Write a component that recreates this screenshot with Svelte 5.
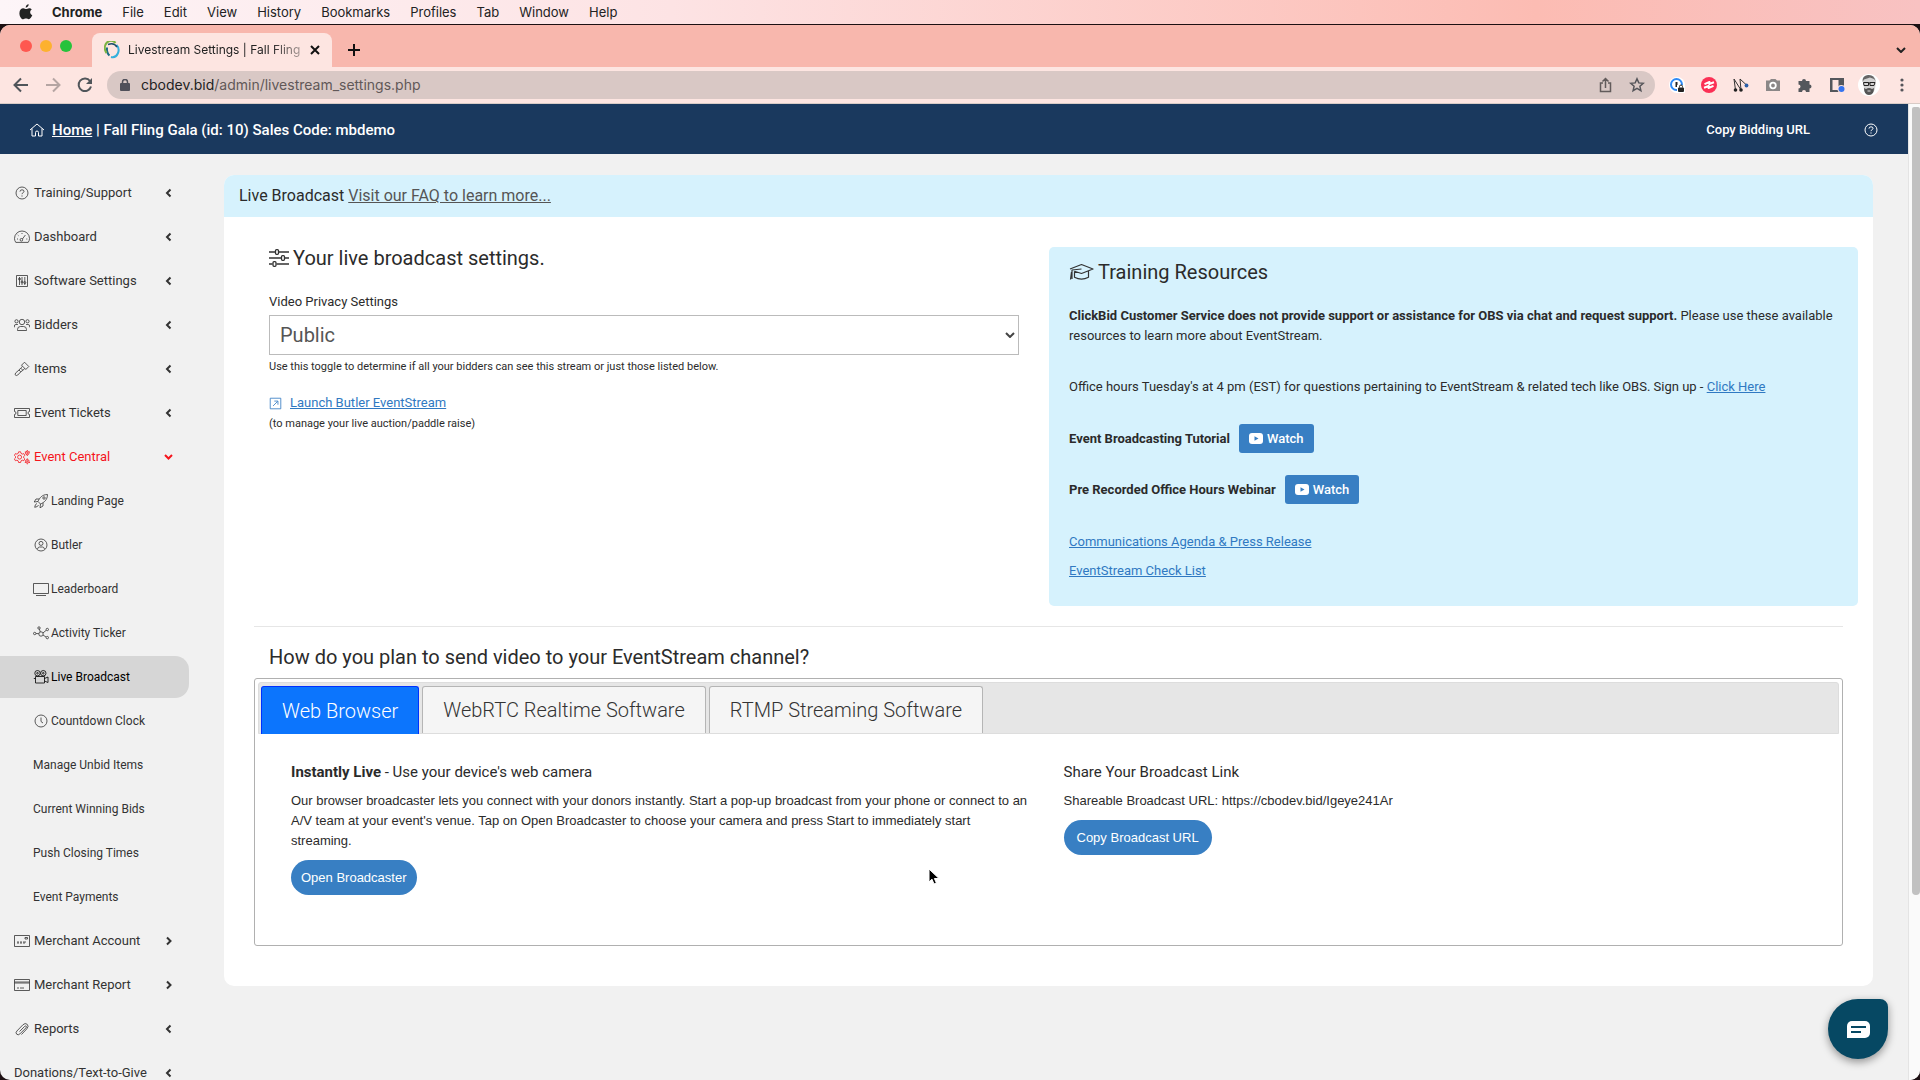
<script>
	const circle = (x, y, r) => `M${x - r} ${y}a${r} ${r} 0 1 0 ${r * 2} 0a${r} ${r} 0 1 0 ${-r * 2} 0z`;

	// line icons on a 16x16 grid
	const icons = {
		question: circle(8, 8, 6) + 'M6 6.600q0-1.800 2-1.800t2 1.600c0 1.400-2 1.200-2 2.800M8 10.400v1.200',
		gauge: 'M1.800 13.400Q.5 11.500.5 9.500a7.500 7.500 0 0 1 15 0q0 2-1.300 3.900z' + circle(7.4, 10.8, 1.3) + 'M8.400 10l3-4M8 4v1M3.800 6l.7.7M3 10h1M12.300 10h1',
		sliders: 'M2.500 2.500h11v11h-11zM5.500 4v8M8 4v8M10.800 4v8' + circle(5.5, 6, 1) + circle(8, 9, 1) + circle(10.8, 9.6, 1),
		users: circle(8, 5, 2.7) + circle(2.5, 4.3, 1.6) + circle(13.5, 4.3, 1.6) + 'M3.500 13.500v-1q0-3 3-3h3q3 0 3 3v1zM.4 10.300V9q0-1.500 1.500-1.500h2M15.600 10.300V9q0-1.500-1.500-1.500h-2',
		gavel: 'M7.500 4.200l3-3 4.300 4.300-3 3zM8.500 5.300L6.700 7.100l2.200 2.200 1.900-1.900M6.700 7.100L5 9M8.900 9.300L6.500 11M5 9l1.800 1.800-3 3.200q-1.500 1-2.300.2t.2-2.300z',
		ticket: 'M.5 3.500h15v3q-1.500 0-1.500 1.500t1.500 1.500v3H.5v-3q1.500 0 1.500-1.500T.5 6.500zM3.800 5.500h8.400v5H3.800z',
		cogs: 'M4.600 2.800h2l.4 1.600 1.300.7 1.500-.5 1 1.800-1.100 1v1.500l1.100 1-1 1.800-1.500-.5-1.300.7-.4 1.600h-2l-.4-1.600-1.300-.7-1.500.5-1-1.800 1.100-1V7.400l-1.100-1 1-1.800 1.500.5 1.300-.7z' + circle(5.600, 8.1, 2) + circle(13.3, 4, 1.8) + circle(13.3, 12.3, 1.8) + circle(13.3, 4, .6) + circle(13.3, 12.3, .6) + 'M13.300 1v1M13.300 6v1M10.800 3h1M15 3h1M13.300 9.300v1M13.300 14.300v1M10.800 13.500h1M15 13.500h1',
		rocket: 'M5 8.500C6.500 5 9 1.500 14.500 1.500 14.500 7 11 9.500 7.500 11zM6 6H3L1.200 9l3.800-.5M10 10v3l-3 1.800.5-3.800' + circle(11, 5, 1.2) + 'M4 10.500q-2 .5-2.300 3.800Q5 14 5.500 12',
		user: circle(8, 8, 6) + circle(8, 6.400, 2) + 'M4.500 12q.5-2 2-2h3q1.500 0 2 2',
		monitor: 'M.5 2.500h15v10H.5zM3 14.500h10',
		network: circle(8, 9, 2.2) + circle(1.700, 8.5, 1.2) + circle(6, 3, 1.2) + circle(14.3, 4.5, 1.2) + circle(14.3, 12.6, 1.2) + 'M3 8.600h2.800M6.400 4.100L7.300 7M9.900 8l3.200-2.600M10 10l3 2',
		camera: circle(4.5, 4.2, 2.700) + circle(10.3, 4.2, 2.700) + 'M2.500 7.500h9v6.500h-9zM11.500 9.500l3.500-1.500v5.500L11.500 12M.8 9.500h1.700' + circle(4.5, 4.2, .8) + circle(10.3, 4.2, .8),
		clock: circle(8, 8, 6) + 'M8 4.500v4l2 1.500',
		check: 'M.5 2.500h15v11H.5zM11 4.500h2.500v1.500H11zM3 9h2M6 9h2M9 9h3M3 10h2M6 10h2M9 10h2',
		card: 'M.5 2.500h15v11H.5zM.5 5h15M.5 6h15M3 11h2M6 11h4',
		clip: 'M5.500 10.500l5-5q1-1 1.700-.3t-.3 1.700l-6 6q-1.700 1.700-3.200.3t.2-3.200l6-6.200q2.300-2.300 4.300-.5t-.3 4.500L7.500 13.500',
		home: 'M1 8l7-6 7 6M3 6.500V14h3.500v-3.500q0-1.500 1.500-1.500t1.500 1.500V14H13V6.500',
		external: 'M1.500 1.500h13v13h-13zM5 11l5.500-5.500M6.500 5H11v4.500'
	};

	const chevrons = {
		left: 'M6.500 1.500L3 5l3.500 3.500',
		right: 'M3 1.500L6.500 5 3 8.500',
		down: 'M1 3l3.500 3.500L8 3'
	};

	const nav = [
		{ label: 'Training/Support', icon: 'question', arrow: 'left' },
		{ label: 'Dashboard', icon: 'gauge', arrow: 'left' },
		{ label: 'Software Settings', icon: 'sliders', arrow: 'left' },
		{ label: 'Bidders', icon: 'users', arrow: 'left' },
		{ label: 'Items', icon: 'gavel', arrow: 'left' },
		{ label: 'Event Tickets', icon: 'ticket', arrow: 'left' },
		{ label: 'Event Central', icon: 'cogs', arrow: 'down', open: true },
		{ label: 'Landing Page', icon: 'rocket', sub: true },
		{ label: 'Butler', icon: 'user', sub: true },
		{ label: 'Leaderboard', icon: 'monitor', sub: true },
		{ label: 'Activity Ticker', icon: 'network', sub: true },
		{ label: 'Live Broadcast', icon: 'camera', sub: true, active: true },
		{ label: 'Countdown Clock', icon: 'clock', sub: true },
		{ label: 'Manage Unbid Items', sub: true },
		{ label: 'Current Winning Bids', sub: true },
		{ label: 'Push Closing Times', sub: true },
		{ label: 'Event Payments', sub: true },
		{ label: 'Merchant Account', icon: 'check', arrow: 'right' },
		{ label: 'Merchant Report', icon: 'card', arrow: 'right' },
		{ label: 'Reports', icon: 'clip', arrow: 'left' },
		{ label: 'Donations/Text-to-Give', arrow: 'left' }
	];

	const menus = ['File', 'Edit', 'View', 'History', 'Bookmarks', 'Profiles', 'Tab', 'Window', 'Help'];
	const tabs = ['Web Browser', 'WebRTC Realtime Software', 'RTMP Streaming Software'];

	let tab = $state(0);
	let privacy = $state('Public');
</script>

{#snippet icon(name)}
	<svg class="icon" viewBox="0 0 16 16" aria-hidden="true"><path d={icons[name]} /></svg>
{/snippet}

{#snippet watch()}
	<button class="watch">
		<svg width="14" height="11" viewBox="0 0 14 11" aria-hidden="true">
			<rect width="14" height="11" rx="3" fill="#fff" />
			<path d="M5.500 3.200v4.600l4-2.300z" fill="#387fc3" />
		</svg>
		Watch
	</button>
{/snippet}

<div class="desktop">
	<div class="menubar">
		<svg class="apple" width="14" height="16" viewBox="0 0 14 16" aria-hidden="true">
			<path d="M9.700.3c.1 1.700-1.400 3.400-3 3.400C6.500 2 8.100.4 9.700.3zM12.800 5.500c-2.400 1.400-2 4.600.5 5.600-.7 2-2.100 4.200-3.500 4.200-1.100 0-1.500-.7-2.800-.7s-1.700.7-2.800.7C2.200 15.300.4 12 .4 9.200c0-3 1.900-4.900 3.900-4.900 1.200 0 2.100.8 2.900.8.700 0 1.800-.9 3.200-.8.9 0 1.800.4 2.400 1.200z" />
		</svg>
		<b>Chrome</b>
		{#each menus as m}<span>{m}</span>{/each}
	</div>

	<div class="window">
		<div class="tabstrip">
			<div class="lights"><i class="red"></i><i class="yellow"></i><i class="green"></i></div>
			<div class="browser-tab">
				<svg width="16" height="18" viewBox="0 0 16 18" fill="none" stroke-width="2" aria-hidden="true">
					<path d="M7 16a6 7 0 0 0 5.500-12" stroke="#36b0dc" />
					<path d="M3 6.500Q2.500 12 5.500 14.500" stroke="#1c6f86" />
					<path d="M4 3.500Q10 1 13 6" stroke="#1b4d6b" stroke-width="1.500" />
					<path d="M11.500 2A6 7 0 0 0 2.500 12" stroke="#7cb342" />
				</svg>
				<span class="tab-title">Livestream Settings | Fall Fling</span>
				<button class="plain" aria-label="Close tab">
					<svg width="10" height="10" viewBox="0 0 10 10"><path d="M1 1l8 8M9 1L1 9" stroke="#111" stroke-width="2" /></svg>
				</button>
			</div>
			<button class="plain new-tab" aria-label="New tab">
				<svg width="12" height="12" viewBox="0 0 12 12"><path d="M6 0v12M0 6h12" stroke="#111" stroke-width="2" /></svg>
			</button>
			<svg class="tab-search" width="10" height="6" viewBox="0 0 10 6" aria-hidden="true"><path d="M1 1l4 4 4-4" stroke="#222" stroke-width="2" fill="none" /></svg>
		</div>

		<div class="toolbar">
			<div class="history">
				<button class="plain" aria-label="Back">
					<svg width="16" height="16" viewBox="0 0 16 16" fill="none" stroke="#50555a" stroke-width="2"><path d="M15 8H2M8 1.500L1.500 8 8 14.500" /></svg>
				</button>
				<button class="plain" aria-label="Forward">
					<svg width="16" height="16" viewBox="0 0 16 16" fill="none" stroke="#b5a5a3" stroke-width="2"><path d="M1 8h13M8 1.500L14.500 8 8 14.500" /></svg>
				</button>
				<button class="plain" aria-label="Reload">
					<svg width="16" height="16" viewBox="0 0 16 16"><path d="M13 4A6.300 6.300 0 1 0 14 9.500" fill="none" stroke="#50555a" stroke-width="2" /><path d="M15 1v6H9z" fill="#50555a" /></svg>
				</button>
			</div>
			<div class="omnibox">
				<svg width="10" height="13" viewBox="0 0 10 13" aria-hidden="true"><rect y="4" width="10" height="8" rx="1" fill="#50505a" /><path d="M2.500 5V3a2.500 2.500 0 0 1 5 0v2" fill="none" stroke="#50505a" stroke-width="1.500" /></svg>
				<span class="url">cbodev.bid<span>/admin/livestream_settings.php</span></span>
				<svg width="14" height="16" viewBox="0 0 14 16" fill="none" stroke="#625b5b" stroke-width="1.500" aria-hidden="true"><path d="M4 6H1.500v8.500h10V6H9M6.500 11V2M3.500 4.500l3-3 3 3" /></svg>
				<svg width="16" height="16" viewBox="0 0 16 16" fill="none" stroke="#55555a" stroke-width="1.500" aria-hidden="true"><path d="M8 1.800l1.800 4.100 4.500.4-3.400 3 1 4.400L8 11.400l-3.900 2.300 1-4.400-3.400-3 4.500-.4z" /></svg>
			</div>
			<div class="extensions">
				<svg width="16" height="16" viewBox="0 0 16 16"><circle cx="8" cy="8" r="8" fill="#fff" /><circle cx="7.500" cy="7.500" r="5.500" fill="none" stroke="#2f8af5" stroke-width="2" /><path d="M7.500 5v5" stroke="#222" stroke-width="2" /><rect x="8" y="8" width="8" height="8" fill="#fff" /><rect x="9" y="10.500" width="6" height="4.500" rx="1" fill="#222" /><path d="M10.500 10.500v-1a1.500 1.500 0 0 1 3 0v1" fill="none" stroke="#222" /></svg>
				<svg width="16" height="16" viewBox="0 0 16 16"><circle cx="8" cy="8" r="8" fill="#fb3055" /><path d="M3.500 7.200L8.500 5l-.3 2L13 5.200M3 10.800l4.800-1.800-.3 2 5-2.200" fill="none" stroke="#fff" stroke-width="2" stroke-linejoin="round" /></svg>
				<svg width="16" height="16" viewBox="0 0 16 16"><path d="M2.500 13L1 2l7 11-1-11 6.500 6" fill="none" stroke="#333" /><circle cx="2.500" cy="13" r="1.800" fill="#222" /><circle cx="8" cy="13" r="1.800" fill="#222" /><circle cx="13.500" cy="8.500" r="1.900" fill="#2b5fa8" /></svg>
				<svg width="16" height="16" viewBox="0 0 16 16"><path d="M1 3.500h3.500L6 2h4.500L12 3.500h3V14H1z" fill="#8b8787" /><circle cx="8" cy="8.500" r="2.800" fill="none" stroke="#fff" stroke-width="1.800" /></svg>
				<svg width="16" height="16" viewBox="0 0 16 16"><path d="M1.500 4H5a2 2 0 1 1 4 0h3.500v3.500a2 2 0 1 1 0 4V15H9a2 2 0 0 0-4 0H1.500v-3.500a2 2 0 0 0 0-4z" fill="#54575c" /></svg>
				<svg width="16" height="16" viewBox="0 0 16 16"><path d="M1 1h14v14H1zM3.500 3v10h6V3z" fill="#54575c" fill-rule="evenodd" /><circle cx="12.500" cy="12" r="4" fill="#fde5e1" /><circle cx="12.500" cy="12" r="3" fill="#3574f0" /></svg>
				<svg class="avatar" width="22" height="22" viewBox="0 0 22 22"><circle cx="11" cy="11" r="11" fill="#fff" /><path d="M5 7q0-6 6-6t7 6l-1 8q-2 6-6 6t-5-6z" fill="#d2d2d2" /><path d="M4.500 8Q4 1.500 10 1t7.500 6l-1.500-2-4-1.500-6 2z" fill="#666" /><path d="M8 15q3-2 6 0l2-1q0 7-5 7t-5-7z" fill="#555" /><path d="M5.500 8.500h5v3H6zM12 8.500h5l-1 3h-4zM10 9h2" fill="none" stroke="#222" /><path d="M9.500 17h3" stroke="#ddd" /></svg>
				<svg width="4" height="16" viewBox="0 0 4 16" fill="#55555a"><circle cx="2" cy="3" r="1.600" /><circle cx="2" cy="8" r="1.600" /><circle cx="2" cy="13" r="1.600" /></svg>
			</div>
		</div>

		<div class="viewport">
			<div class="page">
				<header>
					<div class="crumb">
						{@render icon('home')}
						<span><a href="#home">Home</a> | Fall Fling Gala (id: 10) Sales Code: mbdemo</span>
					</div>
					<div class="header-actions">
						<button class="plain copy">Copy Bidding URL</button>
						<button class="plain help" aria-label="Help">{@render icon('question')}</button>
					</div>
				</header>

				<div class="body">
					<nav>
						{#each nav as item}
							<a href="#nav" class:sub={item.sub} class:active={item.active} class:open={item.open}>
								{#if item.icon}{@render icon(item.icon)}{/if}
								<span>{item.label}</span>
								{#if item.arrow}
									<svg class="arrow" viewBox="0 0 10 10" aria-hidden="true"><path d={chevrons[item.arrow]} /></svg>
								{/if}
							</a>
						{/each}
					</nav>

					<main>
						<section class="card">
							<div class="card-head">Live Broadcast <a href="#faq">Visit our FAQ to learn more...</a></div>

							<div class="columns">
								<div class="settings">
									<h2>
										<svg width="20" height="18" viewBox="0 0 20 18" fill="none" stroke="#333" stroke-width="1.300" aria-hidden="true">
											<path d="M0 3h6M9.500 3H20M0 9h12M16 9h4M0 15h3.500M7.500 15H20" />
											<rect x="6.500" y=".7" width="3" height="4.600" rx="1" /><rect x="12.500" y="6.700" width="3" height="4.600" rx="1" /><rect x="4" y="12.700" width="3" height="4.600" rx="1" />
										</svg>
										Your live broadcast settings.
									</h2>
									<label for="privacy">Video Privacy Settings</label>
									<div class="select">
										<select id="privacy" bind:value={privacy}>
											<option>Public</option>
											<option>Private</option>
										</select>
										<svg width="10" height="6" viewBox="0 0 10 6" aria-hidden="true"><path d="M1 1l4 4 4-4" stroke="#444" stroke-width="2" fill="none" /></svg>
									</div>
									<small>Use this toggle to determine if all your bidders can see this stream or just those listed below.</small>
									<p class="launch">
										{@render icon('external')}
										<a href="#butler">Launch Butler EventStream</a>
									</p>
									<small>(to manage your live auction/paddle raise)</small>
								</div>

								<aside>
									<h2>
										<svg width="25" height="18" viewBox="0 0 25 18" fill="none" stroke="#333" stroke-width="1.200" stroke-linejoin="round" aria-hidden="true">
											<path d="M1 6l11.500-4.500L24 6l-11.500 4.500L5.500 8.300M12.500 6L3 7v9M1.500 16.500L2.500 9M5.500 8.300v6q7 3.600 14 0V8" />
										</svg>
										Training Resources
									</h2>
									<p><b>ClickBid Customer Service does not provide support or assistance for OBS via chat and request support.</b> Please use these available resources to learn more about EventStream.</p>
									<p class="office">Office hours Tuesday's at 4 pm (EST) for questions pertaining to EventStream &amp; related tech like OBS. Sign up - <a href="#signup">Click Here</a></p>
									<div class="video"><b>Event Broadcasting Tutorial</b>{@render watch()}</div>
									<div class="video"><b>Pre Recorded Office Hours Webinar</b>{@render watch()}</div>
									<div class="docs">
										<a href="#agenda">Communications Agenda &amp; Press Release</a>
										<a href="#checklist">EventStream Check List</a>
									</div>
								</aside>
							</div>

							<div class="channel">
								<h2>How do you plan to send video to your EventStream channel?</h2>
								<div class="tabs">
									<div class="tab-bar" role="tablist">
										{#each tabs as t, i}
											<button role="tab" aria-selected={tab === i} class:selected={tab === i} onclick={() => (tab = i)}>{t}</button>
										{/each}
									</div>
									<div class="panel">
										<div>
											<h3><b>Instantly Live</b> - Use your device's web camera</h3>
											<p>Our browser broadcaster lets you connect with your donors instantly. Start a pop-up broadcast from your phone or connect to an A/V team at your event's venue. Tap on Open Broadcaster to choose your camera and press Start to immediately start streaming.</p>
											<button class="pill">Open Broadcaster</button>
										</div>
										<div>
											<h3>Share Your Broadcast Link</h3>
											<p>Shareable Broadcast URL: https://cbodev.bid/Igeye241Ar</p>
											<button class="pill wide">Copy Broadcast URL</button>
										</div>
									</div>
								</div>
							</div>
						</section>
					</main>
				</div>

				<button class="chat" aria-label="Open chat">
					<svg width="23" height="17" viewBox="0 0 23 17"><path d="M5 0h13a5 5 0 0 1 5 5v7a5 5 0 0 1-5 5H0V5a5 5 0 0 1 5-5z" fill="#fff" /><path d="M4 6h15M4 11h10" stroke="#064863" stroke-width="2" /></svg>
				</button>
			</div>
			<div class="scrollbar"><div class="thumb"></div></div>
		</div>
	</div>

	<svg class="cursor" width="12" height="18" viewBox="0 0 12 18" aria-hidden="true"><path d="M1 1v13l3-2.800 2 4.800 2.400-1L6.400 10.500H11z" fill="#000" stroke="#fff" /></svg>
</div>

<style>
	:global(body) {
		margin: 0;
	}
	.desktop {
		position: relative;
		display: flex;
		flex-direction: column;
		height: 100vh;
		overflow: hidden;
		background: #1d1013;
		color: #2b2b2b;
		font: 13px/20px Roboto, sans-serif;
	}
	.desktop :global(*) {
		box-sizing: border-box;
	}
	button {
		font: inherit;
		cursor: pointer;
	}
	.plain {
		display: flex;
		padding: 0;
		border: 0;
		background: none;
	}
	h2,
	h3,
	p {
		margin: 0;
		font-weight: 400;
	}
	a {
		color: #3079c2;
	}
	.icon {
		flex: none;
		width: 16px;
		height: 16px;
		fill: none;
		stroke: currentColor;
	}

	/* menu bar and browser frame */
	.menubar {
		display: flex;
		flex: none;
		align-items: center;
		gap: 20px;
		height: 24px;
		padding-left: 19px;
		background: linear-gradient(90deg, #fdf5f8, #fde3e4 35%, #fcbcb3 80%, #f8c2c2);
		color: #222;
		font-family: Inter, sans-serif;
	}
	.apple {
		margin-right: -1px;
		fill: #222;
	}
	.window {
		display: flex;
		flex: 1;
		flex-direction: column;
		min-height: 0;
		margin-top: 1px;
		border-radius: 10px;
		overflow: hidden;
		background: #f1f1f1;
	}
	.tabstrip {
		display: flex;
		flex: none;
		align-items: center;
		height: 42px;
		padding-left: 20px;
		background: #f8b7ad;
	}
	.lights {
		display: flex;
		gap: 8px;
		width: 72px;
	}
	.lights i {
		width: 12px;
		height: 12px;
		border-radius: 50%;
	}
	.red {
		background: #fe5850;
	}
	.yellow {
		background: #fdb12f;
	}
	.green {
		background: #27c23c;
	}
	.browser-tab {
		display: flex;
		align-items: center;
		align-self: flex-end;
		width: 240px;
		height: 34px;
		padding: 0 12px;
		border-radius: 8px 8px 0 0;
		background: #fde5e1;
		color: #222;
	}
	.tab-title {
		flex: 1;
		margin: 0 4px 0 8px;
		white-space: nowrap;
		font: 12px/16px Inter, sans-serif;
		mask-image: linear-gradient(90deg, #000 80%, #0004);
	}
	.new-tab {
		margin: 8px 0 0 16px;
	}
	.tab-search {
		margin: 8px 14px 0 auto;
	}
	.toolbar {
		display: flex;
		flex: none;
		align-items: center;
		height: 37px;
		padding: 0 16px 0 13px;
		border-bottom: 1px solid #d8cbc6;
		background: #fde5e1;
	}
	.history {
		display: flex;
		gap: 16px;
		width: 94px;
	}
	.omnibox {
		display: flex;
		flex: 1;
		align-items: center;
		gap: 16px;
		height: 28px;
		padding: 0 10px 0 13px;
		border-radius: 14px;
		background: #d9c8c5;
	}
	.url {
		flex: 1;
		margin-left: -5px;
		color: #222;
		font: 14px/20px Inter, sans-serif;
	}
	.url span {
		color: #615858;
	}
	.extensions {
		display: flex;
		align-items: center;
		gap: 16px;
		margin-left: 14px;
	}
	.avatar {
		margin: 0 4px 0 -3px;
	}

	/* page */
	.viewport {
		display: flex;
		flex: 1;
		min-height: 0;
	}
	.page {
		position: relative;
		flex: 1;
		min-width: 0;
		overflow: hidden;
	}
	.scrollbar {
		width: 12px;
		padding: 3px 0 0 3px;
		border-left: 1px solid #e4e4e4;
		background: #fafafa;
	}
	.thumb {
		height: 81%;
		border-radius: 4px 4px 8px 8px;
		background: #c1c1c1;
	}
	header {
		display: flex;
		align-items: center;
		justify-content: space-between;
		height: 50px;
		padding: 2px 29px 0;
		background: #1a395e;
		color: #fff;
	}
	.crumb {
		display: flex;
		align-items: center;
		gap: 7px;
		font-size: 15px;
		font-weight: 500;
	}
	.crumb a {
		color: inherit;
	}
	.header-actions {
		display: flex;
		align-items: center;
		gap: 53px;
	}
	.copy {
		color: #fff;
		font-weight: 500;
	}
	.help {
		color: #fff;
	}
	.body {
		display: flex;
	}
	nav {
		display: flex;
		flex: none;
		flex-direction: column;
		gap: 2px;
		width: 224px;
		padding-top: 18px;
	}
	nav a {
		display: flex;
		align-items: center;
		gap: 4px;
		width: 189px;
		height: 42px;
		padding: 0 15px 0 14px;
		border-radius: 0 14px 14px 0;
		color: #333;
		text-decoration: none;
	}
	nav span {
		flex: 1;
		white-space: nowrap;
	}
	nav .icon {
		stroke-width: 0.8;
	}
	nav .sub {
		padding-left: 33px;
		gap: 2px;
		font-size: 12px;
	}
	nav .active {
		background: #d6d6d6;
		color: #000;
	}
	nav .open {
		color: #f5141c;
	}
	.arrow {
		width: 10px;
		height: 10px;
		fill: none;
		stroke: currentColor;
		stroke-width: 2;
	}
	main {
		flex: 1;
		min-width: 0;
		padding: 21px 35px 0 0;
	}
	.card {
		padding-bottom: 40px;
		border-radius: 10px;
		background: #fff;
		overflow: hidden;
	}
	.card-head {
		height: 42px;
		padding: 11px 15px;
		background: #d6f2fd;
		font-size: 16px;
	}
	.card-head a {
		color: #555;
	}
	.columns {
		display: grid;
		grid-template-columns: minmax(0, 750fr) minmax(0, 809fr);
		gap: 30px;
		padding: 30px 15px 20px 45px;
	}
	h2 {
		display: flex;
		align-items: center;
		gap: 4px;
		font-size: 20px;
		line-height: 22px;
	}
	.settings {
		display: flex;
		flex-direction: column;
	}
	.settings h2 {
		margin-bottom: 23px;
	}
	.select {
		position: relative;
		margin: 3px 0 4px;
	}
	.select svg {
		position: absolute;
		right: 4px;
		top: 17px;
		pointer-events: none;
	}
	select {
		display: block;
		width: 100%;
		height: 40px;
		padding: 0 10px;
		border: 1px solid #bbb;
		border-radius: 0;
		background: #fff;
		color: #555;
		font: 20px/24px Roboto, sans-serif;
		appearance: none;
	}
	small {
		font-size: 11px;
		line-height: 16px;
	}
	.launch {
		display: flex;
		align-items: center;
		gap: 8px;
		margin: 18px 0 3px;
		color: #3079c2;
	}
	.launch .icon {
		width: 13px;
		height: 13px;
	}
	aside {
		min-height: 359px;
		padding: 14px 20px;
		border-radius: 5px;
		background: #d6f2fd;
	}
	aside h2 {
		margin-bottom: 23px;
	}
	.office {
		margin: 31px 0 27px;
	}
	.video {
		display: flex;
		align-items: center;
		gap: 9px;
		margin-bottom: 22px;
	}
	.watch {
		display: flex;
		align-items: center;
		gap: 4px;
		height: 29px;
		padding: 0 10px;
		border: 0;
		border-radius: 3px;
		background: #387fc3;
		color: #fff;
		font-weight: 500;
	}
	.docs {
		display: flex;
		flex-direction: column;
		align-items: flex-start;
		gap: 9px;
		padding-top: 6px;
	}
	.channel {
		margin: 0 30px;
		border-top: 1px solid #e6e6e6;
	}
	.channel h2 {
		padding: 19px 15px 10px;
	}
	.tabs {
		min-height: 268px;
		padding: 3px;
		border: 1px solid #b0b0b0;
		border-radius: 3px;
	}
	.tab-bar {
		display: flex;
		gap: 3px;
		height: 52px;
		padding: 3px 2px 0;
		border: 1px solid #ddd;
		border-radius: 3px 3px 0 0;
		background: #e6e6e6;
	}
	.tab-bar button {
		padding: 0 20px;
		border: 1px solid #b5b5b5;
		border-bottom: 0;
		border-radius: 3px 3px 0 0;
		background: #f5f5f5;
		color: #333;
		font-size: 20px;
		font-weight: 300;
	}
	.tab-bar .selected {
		margin-bottom: -1px;
		border-color: #0030ff;
		background: #0c75fd;
		color: #fff;
	}
	.panel {
		display: grid;
		grid-template-columns: 1fr 1fr;
		gap: 30px;
		padding: 28px 33px 0;
	}
	.panel p {
		margin-bottom: 9px;
		font-family: 'Liberation Sans', sans-serif;
	}
	h3 {
		margin-bottom: 9px;
		font-size: 15px;
	}
	.pill {
		height: 35px;
		padding: 0 10px;
		border: 0;
		border-radius: 18px;
		background: #387fc3;
		color: #fff;
		font: 13px/20px 'Liberation Sans', sans-serif;
	}
	.wide {
		padding: 0 13px;
	}
	.chat {
		position: absolute;
		right: 20px;
		bottom: 21px;
		display: flex;
		align-items: center;
		justify-content: center;
		width: 60px;
		height: 60px;
		border: 0;
		border-radius: 50% 8px 50% 50%;
		background: #064863;
		box-shadow: 0 3px 8px #0006;
	}
	.cursor {
		position: absolute;
		left: 928px;
		top: 868px;
	}
</style>
